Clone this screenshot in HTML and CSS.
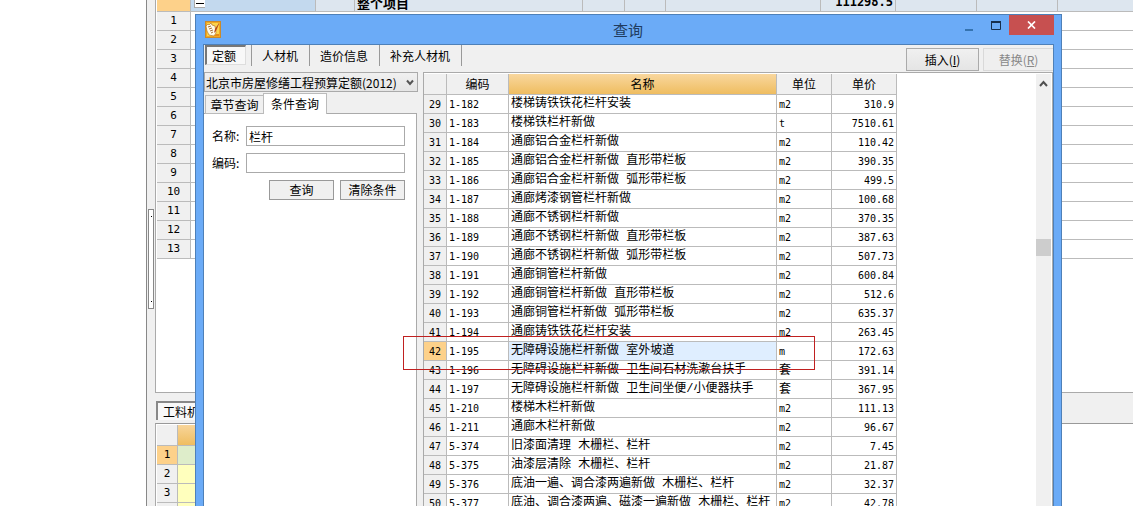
FILE: index.html
```html
<!DOCTYPE html>
<html lang="zh-CN">
<head>
<meta charset="utf-8">
<title>查询</title>
<link rel="stylesheet" href="styles.css">
</head>
<body>
<div class="app">
  <aside class="side"></aside>
  <div class="splitter"><span class="grip"></span></div>
  <main class="work">
    <section class="project">
      <div class="summary">
        <span class="corner"></span><span class="tree"><button class="toggle" aria-label="折叠"><svg width="8" height="6"><path d="M0 2.500h8" stroke="#000"/></svg></button></span>
        <span class="c1"></span><span class="c2"></span><span class="c3">整个项目</span><span class="c4"></span><span class="c5"></span><span class="c6"></span><span class="c7">111298.5</span><span class="c8"></span><span class="c8"></span><span class="rest"></span>
      </div>
      <table class="lines">
        <tr><th>1</th><td></td></tr><tr><th>2</th><td></td></tr><tr><th>3</th><td></td></tr><tr><th>4</th><td></td></tr><tr><th>5</th><td></td></tr><tr><th>6</th><td></td></tr><tr><th>7</th><td></td></tr><tr><th>8</th><td></td></tr><tr><th>9</th><td></td></tr><tr><th>10</th><td></td></tr><tr><th>11</th><td></td></tr><tr><th>12</th><td></td></tr><tr><th>13</th><td></td></tr>
      </table>
    </section>
    <div class="worktabs"><button class="worktab">工料机</button></div>
    <section class="detail">
      <table class="detail-grid">
        <tr class="head"><th></th><td></td></tr>
        <tr class="current"><th>1</th><td></td></tr>
        <tr><th>2</th><td></td></tr>
        <tr><th>3</th><td></td></tr>
        <tr><th></th><td></td></tr>
      </table>
    </section>
  </main>

  <div class="dialog" role="dialog" aria-labelledby="dlg-title">
    <header class="titlebar">
      <svg class="logo" width="16" height="17" viewBox="0 0 16 17">
        <rect x="0.5" y="0.5" width="15" height="16" fill="#f3a91f" stroke="#c98a2c"/>
        <path d="M2 2h12v13H2z" fill="#fbd34c"/>
        <path d="M1 5l2-2 1 1 2-2 1 2 3 1 1 7-2 3-5-1-2-4z" fill="#fffbe8" stroke="#a8641c" stroke-width=".6"/>
        <path d="M3 6l3-1M4 8l3-1M5 10l3-1M6 12l2-1" stroke="#a8703a" stroke-width="1"/>
        <path d="M14 2l-4 6-1 4 2-2 3-7z" fill="#b5451c"/>
        <path d="M11 13h3v2h-5z" fill="#e88a18"/>
      </svg>
      <h1 id="dlg-title">查询</h1>
      <div class="winbtns">
        <button class="win" aria-label="最小化"><svg width="8" height="8"><path d="M0 6h8v2H0z" fill="#3573b0"/></svg></button>
        <button class="win" aria-label="最大化"><svg width="10" height="9"><path d="M.5 1v7.500h9V1" fill="none" stroke="#17304f"/><path d="M0 0h10v2H0z" fill="#17304f"/></svg></button>
        <button class="win close" aria-label="关闭"><svg width="9" height="8"><path d="M1 .5l7 7M8 .5l-7 7" stroke="#fff" stroke-width="1.700"/></svg></button>
      </div>
    </header>
    <div class="client">
      <div class="toolbar">
        <nav class="kinds">
          <div class="kind"><button class="on">定额</button></div>
          <div class="kind k2"><button>人材机</button></div>
          <div class="kind k3"><button>造价信息</button></div>
          <div class="kind k4"><button>补充人材机</button></div>
        </nav>
        <div class="actions">
          <button class="act">插入(<u>I</u>)</button>
          <button class="act" disabled>替换(<u>R</u>)</button>
        </div>
      </div>
      <div class="body">
        <div class="left">
          <div class="combo">
            <select aria-label="定额库"><option>北京市房屋修缮工程预算定额(2012)</option></select>
            <svg width="8" height="7"><path d="M1 1.500L4 5l3-3.500" fill="none" stroke="#555" stroke-width="2"/></svg>
          </div>
          <div class="tabs"><button class="tab">章节查询</button><button class="tab active">条件查询</button></div>
          <form class="query">
            <div class="field"><label for="name">名称:</label><input id="name" type="text" value="栏杆"></div>
            <div class="field"><label for="code">编码:</label><input id="code" type="text"></div>
            <div class="btns"><button type="button">查询</button><button type="button">清除条件</button></div>
          </form>
        </div>
        <div class="results">
          <div class="scroll">
          <table class="grid">
            <colgroup><col class="w-no"><col class="w-code"><col class="w-name"><col class="w-unit"><col class="w-price"></colgroup>
            <thead><tr><th></th><th>编码</th><th class="sorted">名称</th><th>单位</th><th>单价</th></tr></thead>
            <tbody>
            <tr><th>29</th><td>1-182</td><td>楼梯铸铁铁花栏杆安装</td><td>m2</td><td>310.9</td></tr>
            <tr><th>30</th><td>1-183</td><td>楼梯铁栏杆新做</td><td>t</td><td>7510.61</td></tr>
            <tr><th>31</th><td>1-184</td><td>通廊铝合金栏杆新做</td><td>m2</td><td>110.42</td></tr>
            <tr><th>32</th><td>1-185</td><td>通廊铝合金栏杆新做 直形带栏板</td><td>m2</td><td>390.35</td></tr>
            <tr><th>33</th><td>1-186</td><td>通廊铝合金栏杆新做 弧形带栏板</td><td>m2</td><td>499.5</td></tr>
            <tr><th>34</th><td>1-187</td><td>通廊烤漆钢管栏杆新做</td><td>m2</td><td>100.68</td></tr>
            <tr><th>35</th><td>1-188</td><td>通廊不锈钢栏杆新做</td><td>m2</td><td>370.35</td></tr>
            <tr><th>36</th><td>1-189</td><td>通廊不锈钢栏杆新做 直形带栏板</td><td>m2</td><td>387.63</td></tr>
            <tr><th>37</th><td>1-190</td><td>通廊不锈钢栏杆新做 弧形带栏板</td><td>m2</td><td>507.73</td></tr>
            <tr><th>38</th><td>1-191</td><td>通廊铜管栏杆新做</td><td>m2</td><td>600.84</td></tr>
            <tr><th>39</th><td>1-192</td><td>通廊铜管栏杆新做 直形带栏板</td><td>m2</td><td>512.6</td></tr>
            <tr><th>40</th><td>1-193</td><td>通廊铜管栏杆新做 弧形带栏板</td><td>m2</td><td>635.37</td></tr>
            <tr><th>41</th><td>1-194</td><td>通廊铸铁铁花栏杆安装</td><td>m2</td><td>263.45</td></tr>
            <tr class="selected"><th>42</th><td>1-195</td><td>无障碍设施栏杆新做 室外坡道</td><td>m</td><td>172.63</td></tr>
            <tr><th>43</th><td>1-196</td><td>无障碍设施栏杆新做 卫生间石材洗漱台扶手</td><td class="cjk">套</td><td>391.14</td></tr>
            <tr><th>44</th><td>1-197</td><td>无障碍设施栏杆新做 卫生间坐便/小便器扶手</td><td class="cjk">套</td><td>367.95</td></tr>
            <tr><th>45</th><td>1-210</td><td>楼梯木栏杆新做</td><td>m2</td><td>111.13</td></tr>
            <tr><th>46</th><td>1-211</td><td>通廊木栏杆新做</td><td>m2</td><td>96.67</td></tr>
            <tr><th>47</th><td>5-374</td><td>旧漆面清理 木栅栏、栏杆</td><td>m2</td><td>7.45</td></tr>
            <tr><th>48</th><td>5-375</td><td>油漆层清除 木栅栏、栏杆</td><td>m2</td><td>21.87</td></tr>
            <tr><th>49</th><td>5-376</td><td>底油一遍、调合漆两遍新做 木栅栏、栏杆</td><td>m2</td><td>32.37</td></tr>
            <tr><th>50</th><td>5-377</td><td>底油、调合漆两遍、磁漆一遍新做 木栅栏、栏杆</td><td>m2</td><td>42.78</td></tr>
            </tbody>
          </table>
          </div>
          <div class="scrollbar">
            <svg width="9" height="8"><path d="M1 6l3.500-4L8 6" fill="none" stroke="#505050" stroke-width="2"/></svg>
            <span class="thumb"></span>
          </div>
        </div>
      </div>
    </div>
  </div>
  <div class="callout"></div>
</div>
</body>
</html>
```

FILE: styles.css
```css
* { box-sizing: border-box; }
body {
  margin: 0;
  font: 12px/16px "Noto Sans CJK SC", sans-serif;
  color: #000;
  background: #fff;
}
button, input, select { font: inherit; color: inherit; margin: 0; padding: 0; border-radius: 0; }
button { background: none; border: 0; white-space: nowrap; }
table { border-collapse: separate; border-spacing: 0; table-layout: fixed; }
th { font-weight: normal; }

/* application behind the dialog */
.app { position: relative; display: flex; height: 100vh; overflow: hidden; }
.side { flex: 0 0 146px; }
.splitter {
  flex: 0 0 9px;
  display: flex;
  align-items: center;
  justify-content: center;
  padding-top: 12px;
  background: #f0f0f0;
  border-left: 1px solid #888;
}
.grip { width: 6px; height: 100px; background: #fff; border: 1px solid #888; display: flex; flex-direction: column; justify-content: space-between; padding: 6px 1px; }
.grip::before, .grip::after { content: ""; width: 1px; height: 1px; margin-left: 1px; background: #000; }
.work { flex: 1; min-width: 0; display: flex; flex-direction: column; background: #f0f0f0; }
.project { flex: 0 0 393px; background: #fff; border-left: 1px solid #aaa; border-bottom: 1px solid #aaa; padding-left: 1px; overflow: hidden; }
.summary { display: flex; height: 12px; font-weight: bold; }
.summary span { height: 12px; border-right: 1px solid #bbb; border-bottom: 1px solid #bbb; background: #dde6ef; line-height: 5px; }
.summary .corner { width: 34px; background: #fdd18a; }
.summary .tree { width: 14px; background: #c3d9ee; border-right: 0; }
.toggle { display: block; width: 12px; height: 8px; margin-left: 3px; background: #fff; border: 1px solid #aaa; border-top: 0; line-height: 4px; }
.toggle svg { display: block; margin: auto; }
.summary .c1 { width: 111px; background: #c3d9ee; }
.summary .c2 { width: 39px; }
.summary .c3 { width: 228px; padding-left: 2px; font-size: 13px; }
.summary .c4 { width: 42px; }
.summary .c5 { width: 41px; }
.summary .c6 { width: 155px; }
.summary .c7 { width: 75px; text-align: right; padding-right: 2px; font-family: "DejaVu Sans Mono", monospace; }
.summary .c8 { width: 81px; }
.summary .rest { flex: 1; border-right: 0; }
.lines { width: 100%; }
.lines th, .lines td { height: 19px; padding: 0; border-bottom: 1px solid #bbb; }
.lines th, .detail-grid th { width: 34px; background: #f0f0f0; border-right: 1px solid #bbb; font: 11px/16px "DejaVu Sans Mono", monospace; }
.worktabs { flex: 0 0 30px; padding: 8px 1px 0; }
.worktab { display: block; width: 60px; height: 19px; padding-left: 5px; text-align: left; line-height: 17px; background: #f8f8f8; border: 2px solid #888; border-right: 0; border-bottom: 0; }
.detail { flex: 1; background: #fff; border-top: 1px solid #999; border-left: 1px solid #aaa; padding: 1px 0 0 1px; }
.detail-grid { width: 120px; }
.detail-grid th, .detail-grid td { height: 19px; padding: 0; border-bottom: 1px solid #bbb; }
.detail-grid th { width: 21px; }
.detail-grid td { background: #ffffbd; }
.detail-grid .head th, .detail-grid .head td { height: 21px; }
.detail-grid .head td { background: linear-gradient(#f8d59a, #efbd60); }
.detail-grid .current th { background: #fdd18a; }
.detail-grid .current td { background: #deedca; }

/* dialog window */
.dialog {
  position: absolute;
  left: 195px;
  right: 71px;
  top: 14px;
  bottom: 0;
  display: flex;
  flex-direction: column;
  padding: 0 7px;
  background: #6babf7;
  border: 1px solid #4e80b8;
  border-bottom: 0;
}
.titlebar { flex: 0 0 29px; display: flex; align-items: center; }
.logo { margin-left: 2px; }
.titlebar h1 { flex: 1; margin: 0; padding-left: 80px; text-align: center; font-size: 15px; line-height: 20px; font-weight: normal; color: #203b5e; }
.winbtns { display: flex; align-self: flex-start; }
.win { width: 27px; height: 20px; display: grid; place-items: center; }
.win:first-child { padding-top: 4px; }
.close { width: 45px; background: #c75050; }
.client { flex: 1; min-height: 0; display: flex; flex-direction: column; background: #f0f0f0; border: 1px solid #4e80b8; border-bottom: 0; }
.toolbar { flex: 0 0 27px; display: flex; justify-content: space-between; }
.kinds { display: flex; }
.kind { height: 21px; width: 48px; padding: 0 5px 0 1px; border-right: 1px solid #999; }
.k2 { width: 58px; }
.k3 { width: 70px; }
.k4 { width: 82px; }
.kind button { width: 100%; height: 21px; line-height: 20px; }
.k2 button, .k3 button, .k4 button { padding-left: 3px; }
.kind .on { height: 20px; line-height: 16px; padding-right: 4px; background: #f8f8f8; border: 1px solid #ddd; border-top: 2px solid #777; border-left: 2px solid #777; }
.actions { display: flex; gap: 4px; padding-top: 3px; }
.act { width: 73px; height: 23px; background: linear-gradient(#f0f0f0, #e5e5e5); border: 1px solid #aaa; }
.act:disabled { width: 70px; color: #888; background: #efefef; border-color: #d9d9d9; border-right: 0; }
.body { flex: 1; min-height: 0; display: flex; gap: 5px; }
.left { flex: 0 0 214px; display: flex; flex-direction: column; }
.combo { flex: 0 0 20px; display: flex; align-items: center; background: linear-gradient(#f0f0f0, #e5e5e5); border: 1px solid #aaa; }
.combo select { flex: 1; min-width: 0; height: 18px; padding-left: 1px; line-height: 17px; appearance: none; border: 0; background: none; }
.combo svg { margin-right: 3px; }
.tabs { position: relative; z-index: 1; flex: 0 0 22px; display: flex; align-items: flex-end; padding-left: 1px; margin-bottom: -1px; }
.tab { width: 58px; height: 19px; line-height: 17px; border: 1px solid #bbb; border-right: 0; }
.tab.active { width: 64px; height: 21px; line-height: 18px; background: #fff; border-right: 1px solid #bbb; border-bottom: 0; }
.query { flex: 1; margin: 0 1px 0 0; padding: 12px 11px 0 8px; background: #fff; border: 1px solid #aaa; border-left: 0; border-bottom: 0; }
.field { display: flex; align-items: center; justify-content: space-between; margin-bottom: 7px; }
.field label { line-height: 18px; }
.field input { width: 159px; height: 20px; padding: 0 2px; line-height: 18px; border: 1px solid #aaa; background: #fff; }
.btns { display: flex; justify-content: flex-end; gap: 6px; }
.btns button { width: 65px; height: 20px; line-height: 18px; background: #f0f0f0; border: 1px solid #999; }
.results { flex: 1; min-width: 0; display: flex; justify-content: space-between; background: #fff; border: 1px solid #aaa; border-bottom: 0; padding: 1px 1px 0 0; }
.scroll { overflow: hidden; }
.grid { width: 473px; }
.w-no { width: 23px; }
.w-code { width: 62px; }
.w-name { width: 268px; }
.w-unit { width: 55px; }
.w-price { width: 65px; }
.grid th, .grid td { height: 19px; padding: 0 2px; border-right: 1px solid #bbb; border-bottom: 1px solid #bbb; white-space: nowrap; overflow: hidden; }
.grid td { padding-top: 1px; font: 12px/17px "Liberation Mono", "Noto Sans CJK SC", monospace; }
.grid thead th { height: 21px; background: #f0f0f0; }
.grid .sorted { background: linear-gradient(#f9d79e, #efbd60); }
.grid tbody th { padding: 1px 0 0; background: #f0f0f0; }
.grid tbody th, .grid td:nth-child(2), .grid td:nth-child(4), .grid td:nth-child(5) { font: 10px/17px "DejaVu Sans Mono", "Noto Sans CJK SC", monospace; }
.grid td.cjk:nth-child(4) { font-size: 12px; }
.grid td:nth-child(5) { text-align: right; }
.grid .selected th { background: #fdd18a; }
.grid .selected td:nth-child(3) { background: #dfeeff; }
.scrollbar { width: 15px; background: #f0f0f0; display: flex; flex-direction: column; align-items: center; padding-top: 6px; }
.thumb { width: 15px; height: 17px; margin-top: 151px; background: #cdcdcd; }

/* highlight drawn over the window */
.callout { position: absolute; left: 403px; top: 336px; width: 412px; height: 34px; border: 1px solid #c02020; pointer-events: none; }
```
